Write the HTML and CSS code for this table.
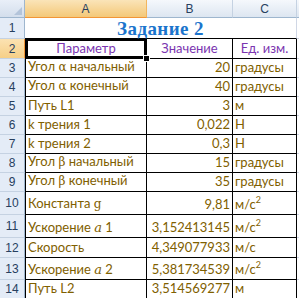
FILE: index.html
```html
<!DOCTYPE html>
<html lang="ru">
<head>
<meta charset="utf-8">
<link rel="stylesheet" href="styles.css">
</head>
<body>
<div class="sheet">
  <div class="corner"><span class="tri"></span></div>
  <div class="colhead sel">A</div>
  <div class="colhead">B</div>
  <div class="colhead">C</div>
  <div class="colhead edge"></div>

  <div class="rowhead">1</div>
  <div class="title">Задание 2</div>
  <div class="pad"></div>

  <div class="rowhead sel">2</div>
  <div class="cell a head active"><span>Параметр</span></div>
  <div class="cell b head"><span>Значение</span></div>
  <div class="cell c head"><span>Ед. изм.</span></div>
  <div class="pad"></div>

  <div class="rowhead">3</div>
  <div class="cell a"><span>Угол <span class="gr">α</span> начальный</span></div>
  <div class="cell b num"><span>20</span></div>
  <div class="cell c"><span>градусы</span></div>
  <div class="pad"></div>

  <div class="rowhead">4</div>
  <div class="cell a"><span>Угол <span class="gr">α</span> конечный</span></div>
  <div class="cell b num"><span>40</span></div>
  <div class="cell c"><span>градусы</span></div>
  <div class="pad"></div>

  <div class="rowhead">5</div>
  <div class="cell a"><span>Путь L1</span></div>
  <div class="cell b num"><span>3</span></div>
  <div class="cell c"><span>м</span></div>
  <div class="pad"></div>

  <div class="rowhead">6</div>
  <div class="cell a"><span>k трения 1</span></div>
  <div class="cell b num"><span>0,022</span></div>
  <div class="cell c"><span>Н</span></div>
  <div class="pad"></div>

  <div class="rowhead">7</div>
  <div class="cell a"><span>k трения 2</span></div>
  <div class="cell b num"><span>0,3</span></div>
  <div class="cell c"><span>Н</span></div>
  <div class="pad"></div>

  <div class="rowhead">8</div>
  <div class="cell a"><span>Угол <span class="gr">β</span> начальный</span></div>
  <div class="cell b num"><span>15</span></div>
  <div class="cell c"><span>градусы</span></div>
  <div class="pad"></div>

  <div class="rowhead">9</div>
  <div class="cell a"><span>Угол <span class="gr">β</span> конечный</span></div>
  <div class="cell b num"><span>35</span></div>
  <div class="cell c"><span>градусы</span></div>
  <div class="pad"></div>

  <div class="rowhead">10</div>
  <div class="cell a"><span>Константа <span class="gr">g</span></span></div>
  <div class="cell b num"><span>9,81</span></div>
  <div class="cell c"><span>м/с<sup>2</sup></span></div>
  <div class="pad"></div>

  <div class="rowhead">11</div>
  <div class="cell a"><span>Ускорение <i class="it">a</i> 1</span></div>
  <div class="cell b num"><span>3,152413145</span></div>
  <div class="cell c"><span>м/с<sup>2</sup></span></div>
  <div class="pad"></div>

  <div class="rowhead">12</div>
  <div class="cell a"><span>Скорость</span></div>
  <div class="cell b num"><span>4,349077933</span></div>
  <div class="cell c"><span>м/с</span></div>
  <div class="pad"></div>

  <div class="rowhead">13</div>
  <div class="cell a"><span>Ускорение <i class="it">a</i> 2</span></div>
  <div class="cell b num"><span>5,381734539</span></div>
  <div class="cell c"><span>м/с<sup>2</sup></span></div>
  <div class="pad"></div>

  <div class="rowhead">14</div>
  <div class="cell a"><span>Путь L2</span></div>
  <div class="cell b num"><span>3,514569277</span></div>
  <div class="cell c"><span>м</span></div>
  <div class="pad"></div>
</div>
</body>
</html>
```
FILE: styles.css
```css
html, body {
  margin: 0;
  padding: 0;
  background: #ffffff;
}
.sheet {
  display: grid;
  grid-template-columns: 25px 122px 86px 64px 2px;
  grid-template-rows: 18px 21px 20px 19px 19px 19px 19px 19px 19px 19px 23px 23px 20px 22px 19px;
  width: 299px;
  height: 298px;
  overflow: hidden;
  font-family: "Lato", "Open Sans", sans-serif;
  font-size: 13px;
}
.corner {
  position: relative;
  background: linear-gradient(#e9eff8, #d3deec);
  border-right: 1px solid #9eb6ce;
  border-bottom: 1px solid #9eb6ce;
  box-sizing: border-box;
}
.tri {
  position: absolute;
  right: 2px;
  bottom: 2px;
  width: 0;
  height: 0;
  border-left: 8px solid transparent;
  border-bottom: 8px solid #b3c4da;
}
.colhead {
  box-sizing: border-box;
  background: linear-gradient(#f5f8fc, #dde6f1);
  border-right: 1px solid #c5d2e2;
  border-bottom: 1px solid #9eb6ce;
  color: #27405f;
  font-family: "Liberation Sans", sans-serif;
  font-size: 12px;
  display: flex;
  align-items: center;
  justify-content: center;
}
.colhead.sel {
  background: linear-gradient(#fae4b8, #f4c878);
  border-bottom: 1px solid #f29536;
  border-right: 1px solid #f2b65e;
}
.colhead.edge {
  border-right: none;
}
.rowhead {
  box-sizing: border-box;
  background: #e4ecf7;
  border-right: 1px solid #9eb6ce;
  border-bottom: 1px solid #c5d2e2;
  color: #27405f;
  font-family: "Liberation Sans", sans-serif;
  font-size: 12px;
  display: flex;
  align-items: center;
  justify-content: center;
}
.rowhead.sel {
  background: linear-gradient(#fbe2b2, #f6cf87);
  border-right: 1px solid #f29536;
}
.title {
  grid-column: 2 / 5;
  box-sizing: border-box;
  border-bottom: 1px solid #000;
  border-right: 1px solid #d0d7e5;
  display: flex;
  align-items: center;
  justify-content: center;
  font-family: "Liberation Serif", "DejaVu Serif", serif;
  font-weight: bold;
  font-size: 19px;
  color: #1b74cc;
  letter-spacing: 0.4px;
  padding-top: 1px;
}
.pad {
  box-sizing: border-box;
  border-bottom: 1px solid #d0d7e5;
}
.cell {
  box-sizing: border-box;
  border-right: 1px solid #000;
  border-bottom: 1px solid #000;
  color: #7f6000;
  display: flex;
  align-items: flex-end;
  padding: 0 2px 2px 2px;
  white-space: nowrap;
  line-height: 15px;
}
.cell.a {
  border-left: 1px solid #000;
}
.cell.num {
  justify-content: flex-end;
}
.cell.head {
  color: #7b35b0;
  justify-content: center;
}
.cell.active {
  position: relative;
  box-shadow: inset 0 0 0 2px #000;
}
.cell.active::after {
  content: "";
  position: absolute;
  right: -4px;
  bottom: -4px;
  width: 5px;
  height: 5px;
  background: #000;
  border: 1px solid #fff;
  z-index: 2;
}
.gr {
  font-family: "DejaVu Serif", serif;
  font-size: 12px;
}
.it {
  font-family: "DejaVu Serif", serif;
  font-style: italic;
}
sup {
  font-size: 9px;
  line-height: 0;
  position: relative;
  top: -1px;
}
```
